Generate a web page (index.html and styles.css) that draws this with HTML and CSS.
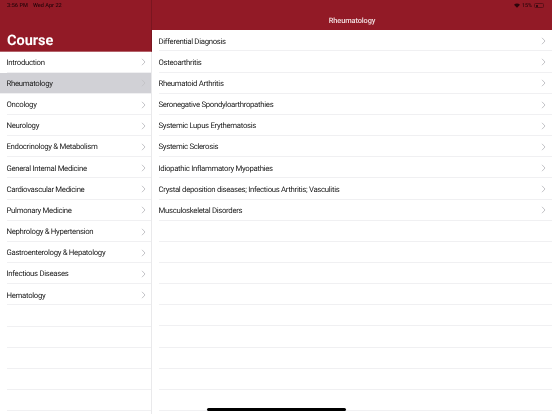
FILE: index.html
```html
<!DOCTYPE html>
<html lang="en">
<head>
<meta charset="utf-8">
<title>Course</title>
<link rel="stylesheet" href="styles.css">
</head>
<body>
<div class="app">
  <aside class="sidebar">
    <header class="side-head">
      <div class="status-left"><span>3:56 PM</span><span>Wed Apr 22</span></div>
      <h1 class="large-title">Course</h1>
    </header>
    <ul class="list">
      <li class="row"><span>Introduction</span><svg class="chev" viewBox="0 0 5 8"><path d="M1 .8 4 4 1 7.2"/></svg></li>
      <li class="row selected"><span>Rheumatology</span><svg class="chev" viewBox="0 0 5 8"><path d="M1 .8 4 4 1 7.2"/></svg></li>
      <li class="row"><span>Oncology</span><svg class="chev" viewBox="0 0 5 8"><path d="M1 .8 4 4 1 7.2"/></svg></li>
      <li class="row"><span>Neurology</span><svg class="chev" viewBox="0 0 5 8"><path d="M1 .8 4 4 1 7.2"/></svg></li>
      <li class="row"><span>Endocrinology &amp; Metabolism</span><svg class="chev" viewBox="0 0 5 8"><path d="M1 .8 4 4 1 7.2"/></svg></li>
      <li class="row"><span>General Internal Medicine</span><svg class="chev" viewBox="0 0 5 8"><path d="M1 .8 4 4 1 7.2"/></svg></li>
      <li class="row"><span>Cardiovascular Medicine</span><svg class="chev" viewBox="0 0 5 8"><path d="M1 .8 4 4 1 7.2"/></svg></li>
      <li class="row"><span>Pulmonary Medicine</span><svg class="chev" viewBox="0 0 5 8"><path d="M1 .8 4 4 1 7.2"/></svg></li>
      <li class="row"><span>Nephrology &amp; Hypertension</span><svg class="chev" viewBox="0 0 5 8"><path d="M1 .8 4 4 1 7.2"/></svg></li>
      <li class="row"><span>Gastroenterology &amp; Hepatology</span><svg class="chev" viewBox="0 0 5 8"><path d="M1 .8 4 4 1 7.2"/></svg></li>
      <li class="row"><span>Infectious Diseases</span><svg class="chev" viewBox="0 0 5 8"><path d="M1 .8 4 4 1 7.2"/></svg></li>
      <li class="row"><span>Hematology</span><svg class="chev" viewBox="0 0 5 8"><path d="M1 .8 4 4 1 7.2"/></svg></li>
      <li class="row"></li>
      <li class="row"></li>
      <li class="row"></li>
      <li class="row"></li>
      <li class="row"></li>
    </ul>
  </aside>
  <main class="detail">
    <header class="detail-head">
      <div class="status-right">
        <svg class="wifi" viewBox="0 0 8 6"><path d="M4 6 0 2C2.200-.3 5.800-.3 8 2Z"/></svg>
        <span>15%</span>
        <span class="battery"><span class="battery-fill"></span></span>
      </div>
      <div class="nav-title">Rheumatology</div>
    </header>
    <ul class="list">
      <li class="row"><span>Differential Diagnosis</span><svg class="chev" viewBox="0 0 5 8"><path d="M1 .8 4 4 1 7.2"/></svg></li>
      <li class="row"><span>Osteoarthritis</span><svg class="chev" viewBox="0 0 5 8"><path d="M1 .8 4 4 1 7.2"/></svg></li>
      <li class="row"><span>Rheumatoid Arthritis</span><svg class="chev" viewBox="0 0 5 8"><path d="M1 .8 4 4 1 7.2"/></svg></li>
      <li class="row"><span>Seronegative Spondyloarthropathies</span><svg class="chev" viewBox="0 0 5 8"><path d="M1 .8 4 4 1 7.2"/></svg></li>
      <li class="row"><span>Systemic Lupus Erythematosis</span><svg class="chev" viewBox="0 0 5 8"><path d="M1 .8 4 4 1 7.2"/></svg></li>
      <li class="row"><span>Systemic Sclerosis</span><svg class="chev" viewBox="0 0 5 8"><path d="M1 .8 4 4 1 7.2"/></svg></li>
      <li class="row"><span>Idiopathic Inflammatory Myopathies</span><svg class="chev" viewBox="0 0 5 8"><path d="M1 .8 4 4 1 7.2"/></svg></li>
      <li class="row"><span>Crystal deposition diseases; Infectious Arthritis; Vasculitis</span><svg class="chev" viewBox="0 0 5 8"><path d="M1 .8 4 4 1 7.2"/></svg></li>
      <li class="row"><span>Musculoskeletal Disorders</span><svg class="chev" viewBox="0 0 5 8"><path d="M1 .8 4 4 1 7.2"/></svg></li>
      <li class="row"></li>
      <li class="row"></li>
      <li class="row"></li>
      <li class="row"></li>
      <li class="row"></li>
      <li class="row"></li>
      <li class="row"></li>
      <li class="row"></li>
      <li class="row"></li>
    </ul>
  </main>
  <div class="home-indicator"></div>
</div>
</body>
</html>
```
FILE: styles.css
```css
* { box-sizing: border-box; }
html, body { margin: 0; height: 100%; }
body { font-family: Roboto, "Liberation Sans", Arial, sans-serif; background: #fff; overflow: hidden; text-rendering: geometricPrecision; }
.app { position: relative; display: flex; width: 552px; height: 414px; overflow: hidden; filter: blur(.2px); }
.sidebar { width: 152px; flex: none; border-right: 1px solid #e9e9eb; }
.detail { flex: 1; min-width: 0; }
.side-head { height: 51.500px; margin-right: -1px; background: #921a26; color: #fff; display: flex; flex-direction: column; justify-content: space-between; padding: 2.500px 7px 0; border-bottom: 1px solid #b4636b; border-right: 1px solid #7a1620; }
.status-left { display: flex; gap: 5px; font-size: 5.600px; line-height: 6px; font-weight: 500; color: #2c060b; }
.large-title { margin: 0; font-size: 14.500px; line-height: 20px; font-weight: 700; }
.detail-head { position: relative; height: 30.300px; background: #921a26; color: #fff; display: flex; align-items: flex-end; justify-content: center; padding-bottom: 4.500px; }
.nav-title { font-size: 7.400px; line-height: 10px; font-weight: 500; letter-spacing: -.1px; color: #f3e3e4; opacity: .99; }
.status-right { position: absolute; top: 2.500px; right: 8px; display: flex; align-items: center; gap: 2px; font-size: 5.400px; line-height: 6px; font-weight: 500; color: #2c060b; }
.wifi { width: 6px; height: 5px; fill: #2c060b; }
.battery { width: 10px; height: 5px; border: .5px solid #5b1018; border-radius: 1.500px; padding: .5px; display: flex; }
.battery-fill { width: 2px; background: #3a0a10; }
.list { margin: 0; padding: 0; list-style: none; }
.row { height: 21.170px; display: flex; align-items: center; justify-content: space-between; margin-left: 6.500px; padding: 1.500px 6px 0 0; font-size: 7.800px; letter-spacing: -.32px; color: #222; border-bottom: 1px solid #f0f0f2; }
.sidebar .row { padding-right: 5px; }
.sidebar .row.selected { background: #d1d1d6; margin-left: 0; padding-left: 6.500px; }
.chev { width: 5px; height: 8px; fill: none; stroke: #c4c4c8; stroke-width: 1; }
.home-indicator { position: absolute; left: 207px; bottom: 3.500px; width: 139px; height: 2.500px; background: #000; border-radius: 2px; }
```
